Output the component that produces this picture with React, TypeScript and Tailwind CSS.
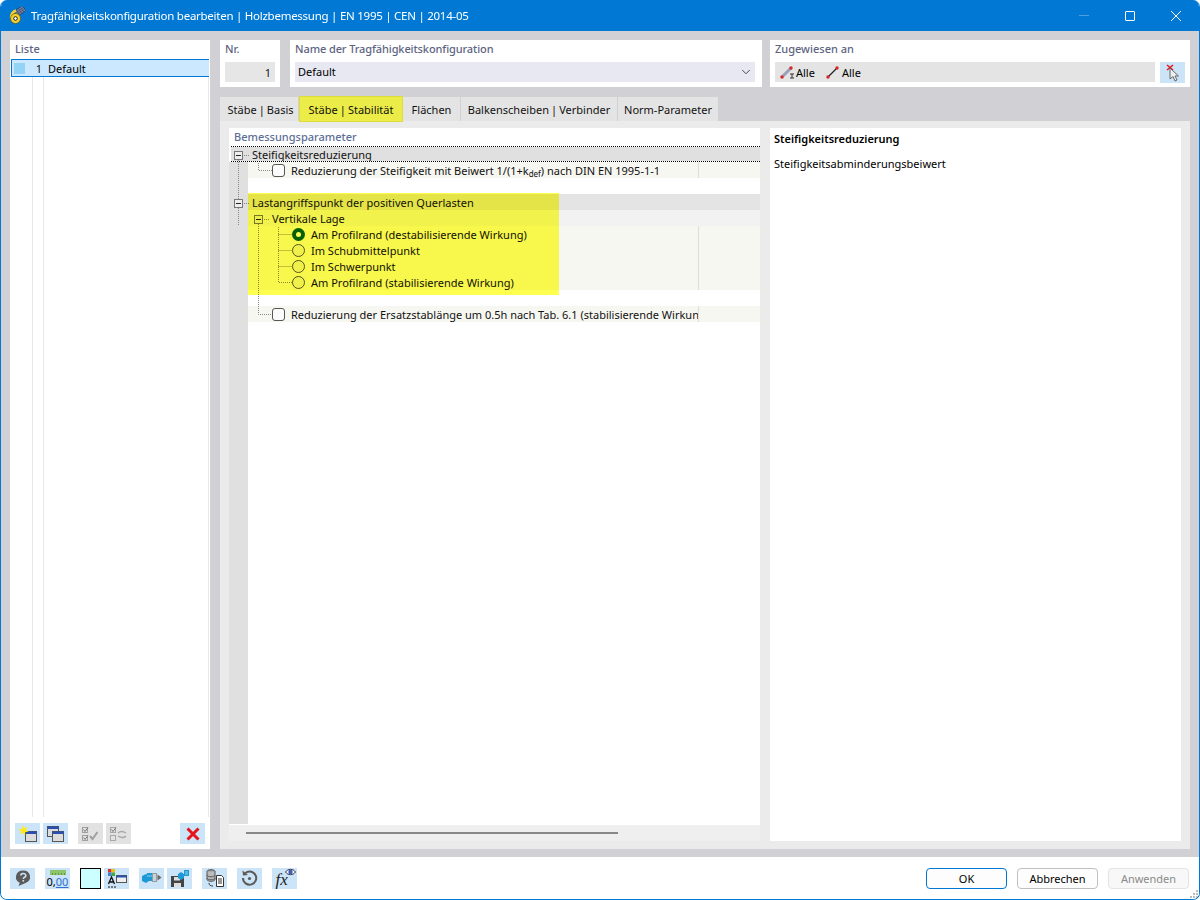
import React from "react";
import { ChevronDown } from "lucide-react";

const font = { fontFamily: '"Noto Sans", "Open Sans", sans-serif' };

function IconButton({ children, off }: { children: React.ReactNode; off?: boolean }) {
  return (
    <button className={`w-[25px] h-[21px] flex items-center justify-center shrink-0 ${off ? "bg-[#e2e2e2]" : "bg-[#cce4f7]"}`}>
      {children}
    </button>
  );
}

function Win({ x, y }: { x: number; y: number }) {
  return (
    <g>
      <rect x={x} y={y} width="11" height="10" fill="#dcdcdc" stroke="#555" />
      <rect x={x} y={y} width="11" height="2.500" fill="#2a4fb0" />
    </g>
  );
}

function NewIcon() {
  return (
    <svg width="20" height="18" viewBox="0 0 20 18">
      <Win x={7.500} y={6.500} />
      <path d="M5 0l1.300 3.200L9.500 2 8 5l2.500 1.700-3.200.3L7 10.500 5 8l-3 1.300L3.300 6.500 0.500 4.500l3.300-.5z" fill="#ffe81a" />
    </svg>
  );
}

function CopyIcon() {
  return (
    <svg width="20" height="18" viewBox="0 0 20 18">
      <Win x={1.500} y={1.500} />
      <Win x={6.500} y={6.500} />
    </svg>
  );
}

function CheckAllIcon() {
  return (
    <svg width="20" height="18" viewBox="0 0 20 18" fill="none" stroke="#a0a0a0">
      <rect x="1.500" y="2.500" width="5" height="5" />
      <rect x="1.500" y="10.500" width="5" height="5" />
      <path d="M2.500 4.500l1.500 2 3-4M2.500 12.500l1.500 2 3-4" stroke="#777" />
      <path d="M9 11l2.500 3 5-7" strokeWidth="2" />
    </svg>
  );
}

function CheckSwapIcon() {
  return (
    <svg width="20" height="18" viewBox="0 0 20 18" fill="none" stroke="#a8a8a8">
      <rect x="1.500" y="2.500" width="5" height="5" />
      <rect x="1.500" y="10.500" width="5" height="5" />
      <path d="M2.500 4.500l1.500 2 3-4" stroke="#777" />
      <path d="M9 8c2-2 5-2 8 0M17 11c-2 2-5 2-8 0" strokeWidth="1.500" />
    </svg>
  );
}

function Help() {
  return (
    <svg width="19" height="18" viewBox="0 0 19 18">
      <path d="M10 1.500a7 6.500 0 0 1 2.500 12.600L5.500 17l1.300-3.200A7 6.500 0 0 1 10 1.500z" fill="#5a5a5a" />
      <path d="M7.800 6.500a2.500 2 0 1 1 3.600 1.800c-.8.500-1.100.8-1.100 1.700" fill="none" stroke="#cce4f7" strokeWidth="1.500" />
      <rect x="9.500" y="11" width="1.600" height="1.600" fill="#cce4f7" />
    </svg>
  );
}

function Units() {
  return (
    <div className="flex flex-col items-center leading-none w-[20px]">
      <svg width="16" height="5" viewBox="0 0 16 5" className="mb-[1px]">
        <rect width="16" height="5" fill="#8fc56a" />
        <path d="M2.500 3v2M5.500 3v2M8.500 3v2M11.500 3v2M14.500 3v2" stroke="#5f9a3f" />
      </svg>
      <span className="text-[11px] text-black">
        0,<span className="text-[#2f6fd0] underline">00</span>
      </span>
    </div>
  );
}

function ColorIcon() {
  return (
    <svg width="20" height="19" viewBox="0 0 20 19">
      <rect x="1" y="0" width="3.500" height="3.500" fill="#d8342a" />
      <rect x="4.500" y="0" width="3.500" height="3.500" fill="#e2c51c" />
      <rect x="1" y="3.500" width="3.500" height="3.500" fill="#3f7fd8" />
      <rect x="4.500" y="3.500" width="3.500" height="3.500" fill="#3fa83f" />
      <path d="M1.500 15l3-7 3 7M2.500 13h4" fill="none" stroke="#111" strokeWidth="1.300" />
      <rect x="9.500" y="6.500" width="10" height="7" fill="#eee" stroke="#555" />
      <rect x="9.500" y="6.500" width="10" height="2" fill="#2a4fb0" />
      <path d="M1 18h8" stroke="#111" strokeDasharray="2 1" />
    </svg>
  );
}

function SendIcon() {
  return (
    <svg width="22" height="16" viewBox="0 0 22 16">
      <path d="M1 6l4-2 3 1v6l-3 2-4-2z" fill="#1d9ad6" />
      <path d="M6 3h5v8H6z" fill="#1d9ad6" />
      <path d="M6 6h5" stroke="#8fd0f0" />
      <rect x="11.500" y="3.500" width="4" height="8" fill="#c4d4e0" stroke="#999" />
      <path d="M16.500 4.500l4 3-4 3z" fill="#666" />
    </svg>
  );
}

function SaveIcon() {
  return (
    <svg width="20" height="19" viewBox="0 0 20 19">
      <path d="M1 7h11l2 2v9H1z" fill="#444" />
      <rect x="4" y="8" width="6" height="3.500" fill="#ddd" />
      <rect x="4" y="14" width="7" height="4" fill="#ddd" />
      <g transform="translate(8 0)">
        <path d="M0 5l3-2 3 2v4l-3 2-3-2z" fill="#1d9ad6" />
        <rect x="6" y="1" width="5" height="6" fill="#1d9ad6" />
        <path d="M7 3h3M7 5h3" stroke="#8fd0f0" />
      </g>
    </svg>
  );
}

function DataIcon() {
  return (
    <svg width="20" height="19" viewBox="0 0 20 19" fill="none">
      <ellipse cx="6" cy="2.500" rx="4" ry="1.800" fill="#999" stroke="#555" />
      <path d="M2 2.500v8c0 1 1.800 1.800 4 1.800s4-.8 4-1.800v-8" fill="#bbb" stroke="#555" />
      <path d="M2 6c0 1 1.800 1.800 4 1.800S10 7 10 6M2 9c0 1 1.800 1.800 4 1.800S10 10 10 9" stroke="#555" />
      <path d="M4 14c0 2 1.500 3 4 3" stroke="#333" />
      <path d="M11.500 6.500h5l2 2v9h-7z" fill="#fff" stroke="#333" />
      <path d="M13 10h4M13 12h4M13 14h4" stroke="#333" />
    </svg>
  );
}

function ResetIcon() {
  return (
    <svg width="19" height="18" viewBox="0 0 19 18" fill="none">
      <path d="M4.400 5A6.600 6.600 0 1 1 3 9" stroke="#5a5a5a" strokeWidth="2" />
      <path d="M2.500 1.500l.5 5 5-.5z" fill="#5a5a5a" />
      <circle cx="9.500" cy="9.500" r="1.600" fill="#5a5a5a" />
    </svg>
  );
}

function FxIcon() {
  return (
    <div className="relative w-[22px] h-[20px] leading-none">
      <span className="absolute left-[2px] top-[3px] text-[17px] italic text-[#222]" style={{ fontFamily: '"Liberation Serif", serif' }}>
        fx
      </span>
      <svg className="absolute right-0 top-0" width="11" height="8" viewBox="0 0 11 8">
        <path d="M.5 4C3 .5 8 .5 10.500 4 8 7.500 3 7.500.5 4z" fill="#fff" stroke="#334" />
        <circle cx="5.500" cy="4" r="2.200" fill="#3b5bb5" />
      </svg>
    </div>
  );
}

function MemberIcon({ section }: { section?: boolean }) {
  return (
    <svg width="18" height="14" viewBox="0 0 18 14">
      {section ? (
        <path d="M2 12L11 3" stroke="#9aa0b5" strokeWidth="3" />
      ) : (
        <path d="M2 12L11 3" stroke="#222" strokeWidth="1.200" />
      )}
      <circle cx="2" cy="12" r="1.700" fill="#d8262c" />
      <circle cx="11" cy="3" r="1.700" fill="#d8262c" />
      {section && <path d="M10 9h4M12 9v4M10 13h4" stroke="#333" fill="none" />}
    </svg>
  );
}

function Check() {
  return <span className="w-[13px] h-[13px] rounded-[3px] border border-[#555] bg-[#fbfbfb] shrink-0" />;
}

function Radio({ on }: { on?: boolean }) {
  return on ? (
    <span className="w-[13px] h-[13px] rounded-full bg-[#05600f] flex items-center justify-center shrink-0">
      <span className="w-[5px] h-[5px] rounded-full bg-white" />
    </span>
  ) : (
    <span className="w-[13px] h-[13px] rounded-full border border-[#555] bg-[#f0f0f0] shrink-0" />
  );
}

function Row({ tone, pad, divider, children, dotted }: { tone?: string; pad?: string; divider?: boolean; children?: React.ReactNode; dotted?: boolean }) {
  return (
    <div className={`h-[16px] flex shrink-0 ${dotted ? "border-y border-dotted border-black ml-[2px]" : ""}`}>
      <div className={`${dotted ? "w-[17px]" : "w-[19px]"} bg-[#e0e0e0] shrink-0`} />
      <div className={`flex-1 flex min-w-0 ${tone ?? "bg-white"}`}>
        <div className={`w-[451px] shrink-0 flex items-center overflow-hidden whitespace-nowrap ${pad ?? ""} ${divider ? "border-r border-[#dddddd]" : ""}`}>
          {children}
        </div>
      </div>
    </div>
  );
}

function TreeLines() {
  const dots = { stroke: "#8a8a8a", strokeDasharray: "1 1", fill: "none" };
  const box = (x: number, y: number) => (
    <g>
      <rect x={x + 0.500} y={y + 0.500} width="8" height="8" fill="#eeeeee" stroke="#777" />
      <path d={`M${x + 2} ${y + 4.500}h5`} stroke="#222" />
    </g>
  );
  return (
    <svg className="absolute left-0 top-0 pointer-events-none" width="70" height="190" viewBox="229 146 70 190">
      <path d="M238.500 160V199M238.500 208V226" {...dots} />
      <path d="M244 155.500h6M244 203.500h6" {...dots} />
      <path d="M258.500 163V170.500H272" {...dots} />
      <path d="M264 219.500h6" {...dots} />
      <path d="M258.500 224V314.500H272" {...dots} />
      <path d="M278.500 227V282.500H292M278.500 234.500H292M278.500 250.500H292M278.500 266.500H292" {...dots} />
      {box(234, 151)}
      {box(234, 199)}
      {box(254, 215)}
    </svg>
  );
}

function Tree() {
  return (
    <div className="flex-1 flex flex-col relative min-h-0 text-[11px] leading-none text-[#111]">
      <Row dotted tone="bg-[#e0e0e0]" pad="pl-[4px]">Steifigkeitsreduzierung</Row>
      <Row tone="bg-[#f7f7f2]" pad="pl-[24px]" divider>
        <Check />
        <span className="ml-[6px]">
          Reduzierung der Steifigkeit mit Beiwert 1/(1+k<sub className="text-[8px] align-baseline relative top-[2px]">def</sub>) nach DIN EN 1995-1-1
        </span>
      </Row>
      <Row />
      <Row tone="bg-[#e4e4e4]" pad="pl-[4px]">Lastangriffspunkt der positiven Querlasten</Row>
      <Row tone="bg-[#f2f2f2]" pad="pl-[24px]">Vertikale Lage</Row>
      <Row tone="bg-[#f7f7f2]" pad="pl-[44px]" divider><Radio on /><span className="ml-[6px]">Am Profilrand (destabilisierende Wirkung)</span></Row>
      <Row tone="bg-[#f7f7f2]" pad="pl-[44px]" divider><Radio /><span className="ml-[6px]">Im Schubmittelpunkt</span></Row>
      <Row tone="bg-[#f7f7f2]" pad="pl-[44px]" divider><Radio /><span className="ml-[6px]">Im Schwerpunkt</span></Row>
      <Row tone="bg-[#f7f7f2]" pad="pl-[44px]" divider><Radio /><span className="ml-[6px]">Am Profilrand (stabilisierende Wirkung)</span></Row>
      <Row />
      <Row tone="bg-[#f7f7f2]" pad="pl-[24px]" divider>
        <Check />
        <span className="ml-[6px]">Reduzierung der Ersatzstablänge um 0.5h nach Tab. 6.1 (stabilisierende Wirkung)</span>
      </Row>
      <div className="flex-1 flex">
        <div className="w-[19px] bg-[#e0e0e0]" />
      </div>
      <TreeLines />
      {/* Markierung aus dem Handbuch */}
      <div className="absolute left-[19px] top-[47px] w-[311px] h-[102px] bg-[#ffff50] mix-blend-multiply pointer-events-none" />
    </div>
  );
}

const tabs = [
  { label: "Stäbe | Basis", w: "w-[79px] pl-[3px]" },
  { label: "Stäbe | Stabilität", w: "w-[104px]", hot: true },
  { label: "Flächen", w: "w-[58px]" },
  { label: "Balkenscheiben | Verbinder", w: "w-[157px]" },
  { label: "Norm-Parameter", w: "w-[101px]" },
];

export default function App() {
  return (
    <div style={font} className="w-[1200px] h-[900px] flex flex-col bg-white border-x border-b border-[#0078d4] rounded-t-[7px] rounded-b-[7px] overflow-hidden text-[11px] text-[#111]">
      {/* Titelleiste */}
      <div className="h-[31px] shrink-0 bg-[#0078d4] flex items-center text-white -mx-px">
        <svg className="ml-[9px]" width="16" height="17" viewBox="0 0 16 17">
          <g transform="rotate(-35 11 4)">
            <rect x="6" y="1" width="10" height="6" fill="#7d89a6" stroke="#2f3a5c" strokeWidth=".7" />
            <path d="M8.500 1v6M11 1v6M13.500 1v6M6 3h10M6 5h10" stroke="#2f3a5c" strokeWidth=".5" />
          </g>
          <path d="M2 11C2 7 4 4.500 7 3.500" fill="none" stroke="#f2d22e" strokeWidth="2.500" />
          <circle cx="6.500" cy="11.500" r="5" fill="#f2d22e" stroke="#6a5510" strokeWidth=".7" />
          <circle cx="6.500" cy="11.500" r="1.800" fill="#fff" stroke="#222" />
        </svg>
        <span className="ml-[6px] text-[11.5px] tracking-[-0.26px]">Tragfähigkeitskonfiguration bearbeiten | Holzbemessung | EN 1995 | CEN | 2014-05</span>
        <div className="ml-auto flex items-center">
          <div className="w-[10px] h-px bg-[#4d9fe0] mr-[36px]" />
          <div className="w-[10px] h-[10px] border border-white rounded-[1px] mr-[36px]" />
          <svg className="mr-[19px]" width="10" height="10" viewBox="0 0 10 10" stroke="#fff">
            <path d="M0 0l10 10M10 0L0 10" />
          </svg>
        </div>
      </div>

      <div className="flex-1 min-h-0 bg-[#d0d0d5] flex gap-[10px] pl-[9px] pr-[9px] pt-[9px] pb-[8px]">
        {/* Liste */}
        <div className="w-[200px] bg-white flex flex-col">
          <div className="h-[19px] pl-[5px] pt-[1px] font-medium text-[#5d6482] shrink-0">Liste</div>
          <div className="flex-1 min-h-0 flex flex-col">
            <div className="h-[18px] ml-px mr-[1px] bg-[#cce8ff] border-y border-[#0078d4] border-l flex items-center shrink-0 pt-[2px]">
              <div className="w-[11px] h-[11px] bg-[#93d4f6] ml-[2px] -mt-[2px]" />
              <span className="w-[17px] text-right">1</span>
              <span className="ml-[6px] text-black">Default</span>
            </div>
            <div className="flex-1 flex pl-[22px]">
              <div className="w-[12px] border-x border-[#e8e8e8]" />
              <div className="flex-1 border-r border-[#e8e8e8] mr-[1px]" />
            </div>
          </div>
          <div className="h-[32px] shrink-0 flex items-start pt-[6px] pl-[5px] pr-[5px]">
            <IconButton><NewIcon /></IconButton>
            <div className="ml-[3px]"><IconButton><CopyIcon /></IconButton></div>
            <div className="ml-[10px]"><IconButton off><CheckAllIcon /></IconButton></div>
            <div className="ml-[3px]"><IconButton off><CheckSwapIcon /></IconButton></div>
            <div className="ml-auto">
              <IconButton>
                <svg width="14" height="14" viewBox="0 0 14 14" stroke="#e8141c" strokeWidth="3">
                  <path d="M1.500 1.500l11 11M12.500 1.500l-11 11" />
                </svg>
              </IconButton>
            </div>
          </div>
        </div>

        <div className="w-[970px] flex flex-col min-h-0">
          {/* Kopfzeile */}
          <div className="h-[47px] flex shrink-0">
            <div className="w-[60px] bg-white px-[5px]">
              <div className="h-[22px] pt-[1px] font-medium text-[#5d6482]">Nr.</div>
              <div className="h-[20px] bg-[#e6e6e6] flex items-center justify-end pr-[4px] pt-[2px]">1</div>
            </div>
            <div className="w-[472px] ml-[10px] bg-white pl-[5px] pr-[7px]">
              <div className="h-[22px] pt-[1px] font-medium tracking-[-0.1px] text-[#5d6482]">Name der Tragfähigkeitskonfiguration</div>
              <div className="h-[20px] bg-[#e8e8f3] flex items-center pl-[3px] pr-[2px] text-black">
                Default
                <ChevronDown className="ml-auto" size={14} strokeWidth={1.500} color="#333" />
              </div>
            </div>
            <div className="w-[420px] ml-[8px] bg-white px-[5px]">
              <div className="h-[22px] pt-[1px] font-medium text-[#5d6482]">Zugewiesen an</div>
              <div className="flex gap-[5px]">
                <div className="flex-1 h-[20px] bg-[#e4e4e4] flex items-center pl-[5px] text-black">
                  <MemberIcon section />
                  <span className="ml-[-2px] pt-[2px]">Alle</span>
                  <span className="ml-[11px] flex items-center"><MemberIcon /><span className="ml-[-2px] pt-[2px]">Alle</span></span>
                </div>
                <button className="w-[25px] h-[21px] bg-[#cce4f7] flex items-center justify-center">
                  <svg width="14" height="18" viewBox="0 0 14 18">
                    <path d="M1 1l6 5M7 1L1 6" stroke="#e8141c" strokeWidth="1.500" />
                    <path d="M4 4v11l3-2.500 2 4.500 2-1-2-4h3.500z" fill="#eee" stroke="#666" />
                  </svg>
                </button>
              </div>
            </div>
          </div>

          {/* Reiter */}
          <div className="h-[24px] mt-[10px] flex shrink-0">
            {tabs.map((t) => (
              <div
                key={t.label}
                className={`${t.w} flex items-center justify-center pt-[2px] [word-spacing:-0.8px] ${t.hot ? "bg-[#ecec48] border border-[#dcdc3c] -mt-px h-[26px] relative" : "bg-[#e4e4e4] border-r border-[#d0d0d5]"}`}
              >
                {t.label}
              </div>
            ))}
          </div>

          {/* Inhalt */}
          <div className="flex-1 min-h-0 bg-[#ebebeb] flex gap-[10px] pl-[9px] pr-[9px] pt-[7px] pb-[8px]">
            <div className="w-[531px] bg-white flex flex-col min-h-0">
              <div className="h-[18px] pl-[5px] pt-[1px] font-medium text-[#5d6e96] shrink-0">Bemessungsparameter</div>
              <Tree />
              <div className="h-[16px] mt-px bg-[#efefef] shrink-0 flex items-center pl-[17px]">
                <div className="w-[372px] h-[2px] bg-[#888888]" />
              </div>
            </div>
            <div className="w-[411px] bg-white pl-[4px] pt-[3px]">
              <div className="font-semibold text-black">Steifigkeitsreduzierung</div>
              <div className="mt-[8px] text-black">Steifigkeitsabminderungsbeiwert</div>
            </div>
          </div>
        </div>
      </div>

      {/* Fußzeile */}
      <div className="h-[42px] shrink-0 bg-white flex items-center pl-[9px] pr-[10px] relative">
        <IconButton><Help /></IconButton>
        <div className="ml-[10px]"><IconButton><Units /></IconButton></div>
        <div className="ml-[10px] w-[21px] h-[21px] bg-[#ccffff] border border-black shrink-0" />
        <div className="ml-[3px]"><IconButton><ColorIcon /></IconButton></div>
        <div className="ml-[10px]"><IconButton><SendIcon /></IconButton></div>
        <div className="ml-[3px]"><IconButton><SaveIcon /></IconButton></div>
        <div className="ml-[10px]"><IconButton><DataIcon /></IconButton></div>
        <div className="ml-[10px]"><IconButton><ResetIcon /></IconButton></div>
        <div className="ml-[10px]"><IconButton><FxIcon /></IconButton></div>
        <div className="ml-auto flex gap-[10px]">
          <button className="w-[81px] h-[21px] rounded-[4px] bg-[#fdfdfd] border border-[#0078d4] text-black pt-[2px]">OK</button>
          <button className="w-[81px] h-[21px] rounded-[4px] bg-[#fdfdfd] border border-[#c0c0c0] text-black pt-[2px]">Abbrechen</button>
          <button className="w-[81px] h-[21px] rounded-[4px] bg-[#f8f8f8] border border-[#e4e4e4] text-[#8a8a8a] pt-[2px]">Anwenden</button>
        </div>
        <svg className="absolute right-0 bottom-0" width="10" height="10" viewBox="0 0 10 10" fill="#bbb">
          <rect x="7" y="1" width="2" height="2" />
          <rect x="4" y="4" width="2" height="2" />
          <rect x="7" y="4" width="2" height="2" />
          <rect x="1" y="7" width="2" height="2" />
          <rect x="4" y="7" width="2" height="2" />
          <rect x="7" y="7" width="2" height="2" />
        </svg>
      </div>
    </div>
  );
}
